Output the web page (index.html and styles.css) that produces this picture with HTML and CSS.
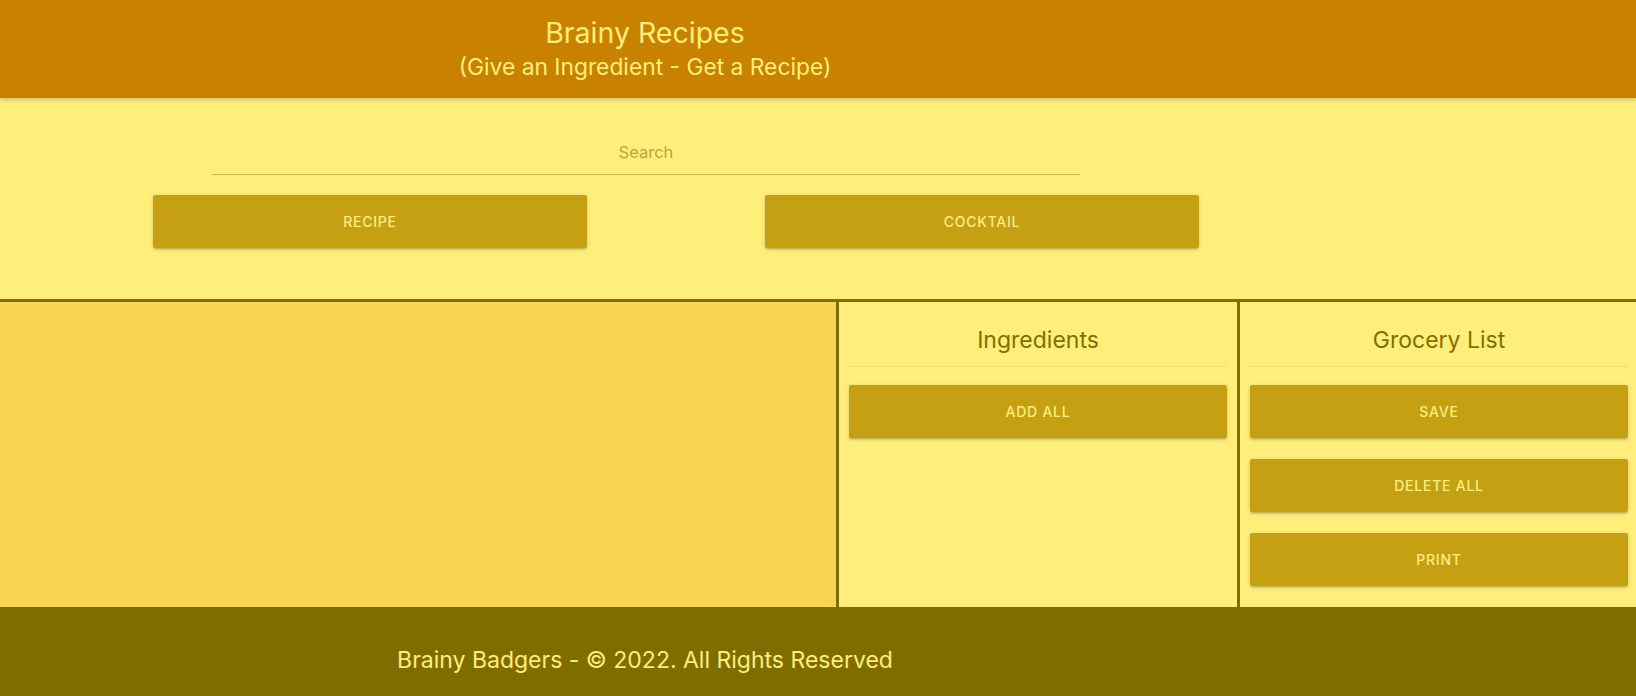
FILE: index.html
```html
<!DOCTYPE html>
<html lang="en">
<head>
<meta charset="utf-8">
<title>Brainy Recipes</title>
<link rel="stylesheet" href="styles.css">
</head>
<body>
<header class="site-header">
  <div class="brand">
    <h1 class="brand-title">Brainy Recipes</h1>
    <p class="brand-sub">(Give an Ingredient - Get a Recipe)</p>
  </div>
</header>
<section class="search-area">
  <div class="search-field">
    <input class="search-input" type="text" placeholder="Search">
  </div>
  <div class="search-actions">
    <button class="btn btn-wide">Recipe</button>
    <button class="btn btn-wide">Cocktail</button>
  </div>
</section>
<main class="panels">
  <div class="panel panel-results"></div>
  <div class="panel panel-list">
    <h2 class="panel-title">Ingredients</h2>
    <div class="panel-buttons">
      <button class="btn">Add all</button>
    </div>
  </div>
  <div class="panel panel-list panel-grocery">
    <h2 class="panel-title">Grocery List</h2>
    <div class="panel-buttons">
      <button class="btn">Save</button>
      <button class="btn">Delete all</button>
      <button class="btn">Print</button>
    </div>
  </div>
</main>
<footer class="site-footer">
  <p class="footer-text">Brainy Badgers - © 2022. All Rights Reserved</p>
</footer>
</body>
</html>
```
FILE: styles.css
```css
* { box-sizing: border-box; }
html, body { margin: 0; padding: 0; }
body {
  font-family: Inter, "Liberation Sans", sans-serif;
  background: #ffee7a;
  width: 1636px;
  height: 696px;
  overflow: hidden;
}

.site-header {
  position: relative;
  z-index: 2;
  height: 98px;
  background: #c88200;
  padding-top: 17px;
  box-shadow: 0 2px 4px rgba(0, 0, 0, 0.18);
}
.brand {
  width: 1290px;
  text-align: center;
  color: #ffee7a;
}
.brand-title {
  margin: 0;
  font-size: 28.5px;
  line-height: 32px;
  font-weight: 400;
}
.brand-sub {
  margin: 0;
  font-size: 22.8px;
  line-height: 36px;
}

.search-area {
  height: 201px;
  padding-top: 29px;
  background: #ffee7a;
}
.search-field {
  margin-left: 212px;
  width: 868px;
}
.search-input {
  display: block;
  width: 100%;
  height: 48px;
  margin: 0;
  padding: 3px 0 0;
  border: none;
  border-bottom: 1px solid #cbb849;
  background: transparent;
  font-family: inherit;
  font-size: 16.5px;
  text-align: center;
  color: #6f6000;
  outline: none;
}
.search-input::placeholder { color: #b8a73e; }

.search-actions {
  display: flex;
  gap: 178px;
  margin-top: 20px;
  padding-left: 153px;
}

.btn {
  display: block;
  height: 53px;
  border: none;
  border-radius: 2px;
  background: #c4a012;
  color: #ffee80;
  font-family: inherit;
  font-size: 14px;
  font-weight: 500;
  letter-spacing: 0.75px;
  text-transform: uppercase;
  box-shadow: 0 2px 2px rgba(0, 0, 0, 0.1), 0 3px 1px -2px rgba(0, 0, 0, 0.08), 0 1px 5px rgba(0, 0, 0, 0.12);
  cursor: pointer;
}
.btn-wide { width: 434px; }

.panels {
  display: grid;
  grid-template-columns: 836px 401px 1fr;
  height: 308px;
  border-top: 3px solid #806d00;
}
.panel-results { background: #f8d354; }
.panel-list {
  border-left: 3px solid #806d00;
  padding: 0 10px;
  background: #ffee7a;
}
.panel-grocery { padding: 0 8px 0 10px; }
.panel-title {
  margin: 24px 0 0;
  padding-bottom: 12px;
  border-bottom: 1px solid #f3dd6e;
  font-size: 23px;
  line-height: 28px;
  font-weight: 400;
  text-align: center;
  color: #807000;
}
.panel-buttons {
  display: flex;
  flex-direction: column;
  gap: 21px;
  margin-top: 18px;
}
.panel-buttons .btn { width: 100%; }

.site-footer {
  height: 89px;
  background: #806d00;
  padding-top: 37px;
}
.footer-text {
  margin: 0;
  width: 1290px;
  text-align: center;
  font-size: 23px;
  line-height: 32px;
  color: #ffee7a;
}
```
